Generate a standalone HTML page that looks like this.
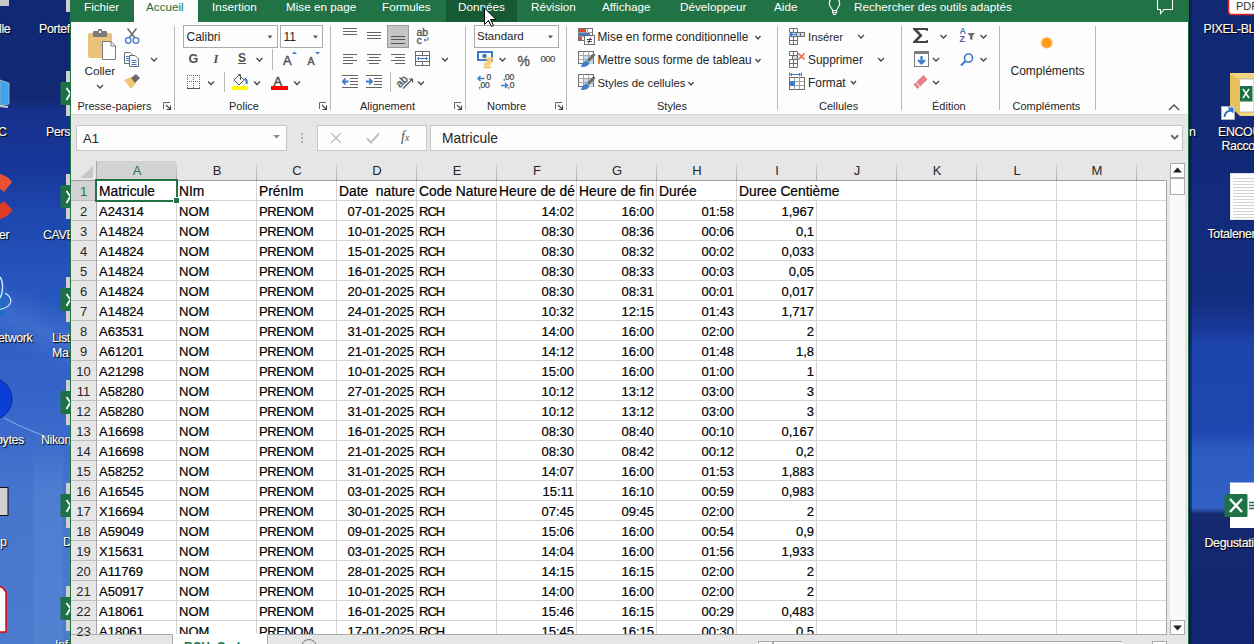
<!DOCTYPE html><html><head><meta charset="utf-8"><style>
html,body{margin:0;padding:0}
body{width:1254px;height:644px;overflow:hidden;position:relative;background:#112875;font-family:"Liberation Sans",sans-serif}
.b{position:absolute}
.t{position:absolute;line-height:1;white-space:nowrap}
.c{color:#000;-webkit-text-stroke:0.2px #000}
.dl{color:#fff;text-shadow:0 0 1px #000,1px 1px 1px #000;-webkit-text-stroke:0.15px #fff}
</style></head><body>
<div class="b" style="left:0;top:0;width:70px;height:644px;background:linear-gradient(180deg,#112875 0px,#112975 100px,#16318c 110px,#18379a 170px,#1d45ad 210px,#2453bb 270px,#2d5cc4 330px,#3968cb 420px,#4676cc 500px,#4a7bcd 644px)"></div>
<div class="b" style="left:0;top:0;width:70px;height:644px;overflow:hidden"><div class="b" style="left:-40px;top:300px;width:160px;height:60px;background:linear-gradient(180deg,rgba(90,140,220,0) 0%,rgba(90,140,220,0.35) 50%,rgba(90,140,220,0) 100%);transform:rotate(24deg)"></div><div class="b" style="left:33px;top:440px;width:30px;height:204px;background:linear-gradient(180deg,rgba(100,150,225,0) 0px,rgba(100,150,225,0.25) 50px)"></div></div>
<div class="b" style="left:1189px;top:0;width:65px;height:644px;background:linear-gradient(180deg,#112875 0px,#112976 120px,#132d80 300px,#1a3a9a 330px,#1d44ab 345px,#1e47b0 430px,#2c5cc2 450px,#3060c4 508px,#14296e 514px,#112672 644px)"></div>
<svg class="b" style="left:0;top:0" width="1254" height="644" viewBox="0 0 1254 644"><rect x="0" y="0" width="9" height="6" fill="#c8c8c8"/><path d="M0 80 L9 83 V104 L0 106 Z" fill="#3aa5f2" stroke="#9ab" stroke-width="1"/><path d="M0 106 L8 107" stroke="#ccc" stroke-width="2"/><path d="M0 174 Q8 176 12 182 L4 192 Q2 190 0 189 Z" fill="#ea5234"/><path d="M0 219 Q8 217 12.5 210 L4 201 Q2 203 0 204 Z" fill="#e03b24"/><ellipse cx="1" cy="304" rx="5" ry="13" fill="#1a6cc6" opacity="0.7"/><path d="M0 277 Q3 281 2.5 289 Q2 295 0 298" stroke="#d8f0ff" stroke-width="1.3" fill="none"/><path d="M5 293 Q12 297 10.5 303 Q8 308 0 309.5" stroke="#c4e6ff" stroke-width="1.2" fill="none"/><circle cx="-9" cy="399" r="21" fill="#0a3ed6" stroke="#072a90" stroke-width="1"/><path d="M4 418 Q30 432 70 445" stroke="#8fc0f5" stroke-width="1.2" fill="none" opacity="0.7"/><rect x="-4" y="487.5" width="12" height="28" fill="#d0d0d0" stroke="#111" stroke-width="1"/><path d="M-4 587 H2 L6 592 V632 H-4 Z" fill="#fff" stroke="#e00" stroke-width="1.5"/><rect x="66" y="0" width="4" height="12" fill="#cfcfcf"/><rect x="66" y="71" width="4" height="45" fill="#cfcfcf"/><rect x="60.5" y="82" width="10" height="23" rx="1" fill="#1e7145"/><path d="M66.5 88 L70 93 M66.5 100 L70 94" stroke="#fff" stroke-width="1.8"/><rect x="66" y="174" width="4" height="45" fill="#cfcfcf"/><rect x="60.5" y="185" width="10" height="23" rx="1" fill="#1e7145"/><path d="M66.5 191 L70 196 M66.5 203 L70 197" stroke="#fff" stroke-width="1.8"/><rect x="66" y="277" width="4" height="45" fill="#cfcfcf"/><rect x="60.5" y="288" width="10" height="23" rx="1" fill="#1e7145"/><path d="M66.5 294 L70 299 M66.5 306 L70 300" stroke="#fff" stroke-width="1.8"/><rect x="66" y="380" width="4" height="45" fill="#cfcfcf"/><rect x="60.5" y="391" width="10" height="23" rx="1" fill="#1e7145"/><path d="M66.5 397 L70 402 M66.5 409 L70 403" stroke="#fff" stroke-width="1.8"/><rect x="66" y="483" width="4" height="45" fill="#cfcfcf"/><rect x="60.5" y="494" width="10" height="23" rx="1" fill="#1e7145"/><path d="M66.5 500 L70 505 M66.5 512 L70 506" stroke="#fff" stroke-width="1.8"/><rect x="66" y="586" width="4" height="45" fill="#cfcfcf"/><rect x="60.5" y="597" width="10" height="23" rx="1" fill="#1e7145"/><path d="M66.5 603 L70 608 M66.5 615 L70 609" stroke="#fff" stroke-width="1.8"/><rect x="1228.5" y="-5" width="30" height="19.5" rx="3" fill="#fff" stroke="#e02020" stroke-width="1.5"/><path d="M1230 73 H1254 V116 H1240 L1230 105 Z" fill="#f3d67f"/><path d="M1236 79 H1254 V112 H1236 Z" fill="#fff" stroke="#aaa" stroke-width="0.8"/><rect x="1239.5" y="86" width="13" height="15.5" fill="#1e7145"/><path d="M1243 89 L1249 98 M1249 89 L1243 98" stroke="#fff" stroke-width="1.4"/><path d="M1230 73 L1240 80 V116 L1230 106 Z" fill="#e9bf5a"/><rect x="1221.5" y="106.5" width="13" height="13" fill="#fff" stroke="#bbb" stroke-width="0.8"/><path d="M1224.5 117 Q1225 111 1231 110.5 L1229.5 108.5 H1232.5 V111.5 L1231 110.5" stroke="#2d6fc4" stroke-width="2" fill="none"/><rect x="1230.5" y="173.5" width="30" height="46" fill="#fff" stroke="#e2e2e2"/><path d="M1233 178.5 H1254" stroke="#d2d2d2"/><path d="M1233 181.5 H1254" stroke="#d2d2d2"/><path d="M1233 184.5 H1254" stroke="#d2d2d2"/><path d="M1233 187.5 H1254" stroke="#d2d2d2"/><path d="M1233 190.5 H1254" stroke="#d2d2d2"/><path d="M1233 193.5 H1254" stroke="#d2d2d2"/><path d="M1233 196.5 H1254" stroke="#d2d2d2"/><path d="M1233 199.5 H1254" stroke="#d2d2d2"/><path d="M1233 202.5 H1254" stroke="#d2d2d2"/><path d="M1233 205.5 H1254" stroke="#d2d2d2"/><path d="M1233 208.5 H1254" stroke="#d2d2d2"/><path d="M1233 211.5 H1254" stroke="#d2d2d2"/><path d="M1233 214.5 H1254" stroke="#d2d2d2"/><path d="M1233 217.5 H1254" stroke="#d2d2d2"/><rect x="1230" y="482.5" width="30" height="45.5" fill="#fff"/><path d="M1249 502.5 H1254 M1249 505.5 H1254 M1249 508.5 H1254" stroke="#1e7145" stroke-width="1.6"/><rect x="1224.5" y="494" width="23" height="23" rx="1.5" fill="#1e7145"/><path d="M1230 499 L1242 512 M1242 499 L1230 512" stroke="#fff" stroke-width="2.4"/><rect x="1189" y="0" width="3" height="644" fill="#0b1c55" opacity="0.6"/><rect x="1189" y="0" width="1" height="644" fill="#080c30" opacity="0.8"/></svg>
<div class="t dl" style="left:-1px;top:22.50px;font-size:12.4px;letter-spacing:-0.35px">lle</div>
<div class="t dl" style="left:39px;top:22.50px;font-size:12.4px;letter-spacing:-0.35px">Portef</div>
<div class="t dl" style="left:-2px;top:125.50px;font-size:12.4px;letter-spacing:-0.35px">C</div>
<div class="t dl" style="left:46px;top:125.50px;font-size:12.4px;letter-spacing:-0.35px">Perso</div>
<div class="t dl" style="left:-1px;top:228.50px;font-size:12.4px;letter-spacing:-0.35px">er</div>
<div class="t dl" style="left:43px;top:228.50px;font-size:12.4px;letter-spacing:-0.35px">CAVE</div>
<div class="t dl" style="left:-2px;top:331.50px;font-size:12.4px;letter-spacing:-0.35px">etwork</div>
<div class="t dl" style="left:52px;top:331.50px;font-size:12.4px;letter-spacing:-0.35px">List</div>
<div class="t dl" style="left:52px;top:346.50px;font-size:12.4px;letter-spacing:-0.35px">Ma</div>
<div class="t dl" style="left:-4px;top:433.50px;font-size:12.4px;letter-spacing:-0.35px">bytes</div>
<div class="t dl" style="left:41px;top:433.50px;font-size:12.4px;letter-spacing:-0.35px">Nikon</div>
<div class="t dl" style="left:0px;top:535.50px;font-size:12.4px;letter-spacing:-0.35px">p</div>
<div class="t dl" style="left:63px;top:535.50px;font-size:12.4px;letter-spacing:-0.35px">D</div>
<div class="t dl" style="left:1203.5px;top:22.50px;font-size:12.4px;letter-spacing:-0.35px">PIXEL-BLU</div>
<div class="t dl" style="left:1189px;top:125.50px;font-size:12.4px;letter-spacing:-0.35px">n</div>
<div class="t dl" style="left:1218px;top:125.50px;font-size:12.4px;letter-spacing:-0.35px">ENCOU</div>
<div class="t dl" style="left:1221.5px;top:139.50px;font-size:12.4px;letter-spacing:-0.35px">Racco</div>
<div class="t dl" style="left:1207.5px;top:228.00px;font-size:12.4px;letter-spacing:-0.35px">Totalener</div>
<div class="t dl" style="left:1204.5px;top:537.00px;font-size:12.4px;letter-spacing:-0.35px">Degustati</div>
<div class="t dl" style="left:55px;top:638.50px;font-size:12.4px;letter-spacing:-0.35px">Inf</div>
<div class="t" style="left:1236px;top:1px;font-size:11px;color:#333">PDF</div>
<div class="b" style="left:70px;top:0px;width:1px;height:644px;background:#217346"></div>
<div class="b" style="left:1188px;top:0px;width:1px;height:644px;background:#217346"></div>
<div class="b" style="left:71px;top:0px;width:1117px;height:22px;background:#217346"></div>
<div class="b" style="left:71px;top:22px;width:1117px;height:92px;background:#fdfdfd"></div>
<div class="b" style="left:71px;top:114px;width:1117px;height:1px;background:#d5d5d5"></div>
<div class="b" style="left:71px;top:115px;width:1117px;height:519px;background:#e6e6e6"></div>
<div class="b" style="left:71px;top:634px;width:1117px;height:10px;background:#e6e6e6"></div>
<div class="b" style="left:134px;top:0px;width:64px;height:22px;background:#fdfdfd"></div>
<div class="b" style="left:446px;top:0px;width:71px;height:22px;background:#155a33"></div>
<div class="t " style="left:84px;top:1.10px;font-size:11.7px;color:#ffffff;">Fichier</div>
<div class="t " style="left:212px;top:1.10px;font-size:11.7px;color:#ffffff;">Insertion</div>
<div class="t " style="left:286px;top:1.10px;font-size:11.7px;color:#ffffff;">Mise en page</div>
<div class="t " style="left:382px;top:1.10px;font-size:11.7px;color:#ffffff;">Formules</div>
<div class="t " style="left:458px;top:1.10px;font-size:11.7px;color:#ffffff;">Données</div>
<div class="t " style="left:531px;top:1.10px;font-size:11.7px;color:#ffffff;">Révision</div>
<div class="t " style="left:602px;top:1.10px;font-size:11.7px;color:#ffffff;">Affichage</div>
<div class="t " style="left:680px;top:1.10px;font-size:11.7px;color:#ffffff;">Développeur</div>
<div class="t " style="left:774px;top:1.10px;font-size:11.7px;color:#ffffff;">Aide</div>
<div class="t " style="left:854px;top:1.10px;font-size:11.7px;color:#ffffff;">Rechercher des outils adaptés</div>
<div class="t " style="left:146px;top:1.10px;font-size:11.7px;color:#217346;">Accueil</div>
<div class="b" style="left:76px;top:125px;width:211px;height:26px;background:#fdfdfd;border:1px solid #c6c6c6;box-sizing:border-box"></div>
<div class="t " style="left:83px;top:132.00px;font-size:13px;color:#262626;">A1</div>
<svg class="b" style="left:272px;top:134px" width="9" height="6" viewBox="0 0 9 6"><path d="M1 1 L8 1 L4.5 4.6 Z" fill="#8a8a8a"/></svg>
<div class="b" style="left:301px;top:133px;width:2px;height:2px;background:#b4b4b4"></div>
<div class="b" style="left:301px;top:137px;width:2px;height:2px;background:#b4b4b4"></div>
<div class="b" style="left:301px;top:141px;width:2px;height:2px;background:#b4b4b4"></div>
<div class="b" style="left:317px;top:125px;width:110px;height:26px;background:#fdfdfd;border:1px solid #c6c6c6;box-sizing:border-box"></div>
<svg class="b" style="left:330px;top:132px" width="12" height="12" viewBox="0 0 12 12"><path d="M1 1 L11 11 M11 1 L1 11" stroke="#c2c2c2" stroke-width="1.5"/></svg>
<svg class="b" style="left:366px;top:132px" width="14" height="12" viewBox="0 0 14 12"><path d="M1 6.5 L5 10.5 L13 1.5" stroke="#c2c2c2" stroke-width="2" fill="none"/></svg>
<div class="t" style="left:401px;top:130px;font-size:14px;font-family:'Liberation Serif',serif;font-style:italic;color:#555">f<span style="font-size:10px">x</span></div>
<div class="b" style="left:430px;top:125px;width:753px;height:26px;background:#fdfdfd;border:1px solid #c6c6c6;box-sizing:border-box"></div>
<div class="t " style="left:442px;top:131.82px;font-size:13.8px;color:#262626;">Matricule</div>
<svg class="b" style="left:1170px;top:133px" width="10" height="8" viewBox="0 0 10 8"><path d="M1.2 2.2 L4.7 5.7 L8.2 2.2" stroke="#6a6a6a" stroke-width="2" fill="none"/></svg>
<div class="b" style="left:97px;top:181px;width:1069px;height:453px;background:#ffffff"></div>
<div class="b" style="left:176px;top:181px;width:1px;height:453px;background:#d4d4d4"></div>
<div class="b" style="left:256px;top:181px;width:1px;height:453px;background:#d4d4d4"></div>
<div class="b" style="left:336px;top:181px;width:1px;height:453px;background:#d4d4d4"></div>
<div class="b" style="left:416px;top:181px;width:1px;height:453px;background:#d4d4d4"></div>
<div class="b" style="left:496px;top:181px;width:1px;height:453px;background:#d4d4d4"></div>
<div class="b" style="left:576px;top:181px;width:1px;height:453px;background:#d4d4d4"></div>
<div class="b" style="left:656px;top:181px;width:1px;height:453px;background:#d4d4d4"></div>
<div class="b" style="left:736px;top:181px;width:1px;height:453px;background:#d4d4d4"></div>
<div class="b" style="left:816px;top:181px;width:1px;height:453px;background:#d4d4d4"></div>
<div class="b" style="left:896px;top:181px;width:1px;height:453px;background:#d4d4d4"></div>
<div class="b" style="left:976px;top:181px;width:1px;height:453px;background:#d4d4d4"></div>
<div class="b" style="left:1056px;top:181px;width:1px;height:453px;background:#d4d4d4"></div>
<div class="b" style="left:1136px;top:181px;width:1px;height:453px;background:#d4d4d4"></div>
<div class="b" style="left:71px;top:200px;width:1095px;height:1px;background:#d4d4d4"></div>
<div class="b" style="left:71px;top:220px;width:1095px;height:1px;background:#d4d4d4"></div>
<div class="b" style="left:71px;top:240px;width:1095px;height:1px;background:#d4d4d4"></div>
<div class="b" style="left:71px;top:260px;width:1095px;height:1px;background:#d4d4d4"></div>
<div class="b" style="left:71px;top:280px;width:1095px;height:1px;background:#d4d4d4"></div>
<div class="b" style="left:71px;top:300px;width:1095px;height:1px;background:#d4d4d4"></div>
<div class="b" style="left:71px;top:320px;width:1095px;height:1px;background:#d4d4d4"></div>
<div class="b" style="left:71px;top:340px;width:1095px;height:1px;background:#d4d4d4"></div>
<div class="b" style="left:71px;top:360px;width:1095px;height:1px;background:#d4d4d4"></div>
<div class="b" style="left:71px;top:380px;width:1095px;height:1px;background:#d4d4d4"></div>
<div class="b" style="left:71px;top:400px;width:1095px;height:1px;background:#d4d4d4"></div>
<div class="b" style="left:71px;top:420px;width:1095px;height:1px;background:#d4d4d4"></div>
<div class="b" style="left:71px;top:440px;width:1095px;height:1px;background:#d4d4d4"></div>
<div class="b" style="left:71px;top:460px;width:1095px;height:1px;background:#d4d4d4"></div>
<div class="b" style="left:71px;top:480px;width:1095px;height:1px;background:#d4d4d4"></div>
<div class="b" style="left:71px;top:500px;width:1095px;height:1px;background:#d4d4d4"></div>
<div class="b" style="left:71px;top:520px;width:1095px;height:1px;background:#d4d4d4"></div>
<div class="b" style="left:71px;top:540px;width:1095px;height:1px;background:#d4d4d4"></div>
<div class="b" style="left:71px;top:560px;width:1095px;height:1px;background:#d4d4d4"></div>
<div class="b" style="left:71px;top:580px;width:1095px;height:1px;background:#d4d4d4"></div>
<div class="b" style="left:71px;top:600px;width:1095px;height:1px;background:#d4d4d4"></div>
<div class="b" style="left:71px;top:620px;width:1095px;height:1px;background:#d4d4d4"></div>
<div class="b" style="left:71px;top:180px;width:1096px;height:1px;background:#9f9f9f"></div>
<div class="b" style="left:96px;top:161px;width:1px;height:473px;background:#a6a6a6"></div>
<div class="b" style="left:71px;top:200px;width:25px;height:1px;background:#bcbcbc"></div>
<div class="b" style="left:71px;top:220px;width:25px;height:1px;background:#bcbcbc"></div>
<div class="b" style="left:71px;top:240px;width:25px;height:1px;background:#bcbcbc"></div>
<div class="b" style="left:71px;top:260px;width:25px;height:1px;background:#bcbcbc"></div>
<div class="b" style="left:71px;top:280px;width:25px;height:1px;background:#bcbcbc"></div>
<div class="b" style="left:71px;top:300px;width:25px;height:1px;background:#bcbcbc"></div>
<div class="b" style="left:71px;top:320px;width:25px;height:1px;background:#bcbcbc"></div>
<div class="b" style="left:71px;top:340px;width:25px;height:1px;background:#bcbcbc"></div>
<div class="b" style="left:71px;top:360px;width:25px;height:1px;background:#bcbcbc"></div>
<div class="b" style="left:71px;top:380px;width:25px;height:1px;background:#bcbcbc"></div>
<div class="b" style="left:71px;top:400px;width:25px;height:1px;background:#bcbcbc"></div>
<div class="b" style="left:71px;top:420px;width:25px;height:1px;background:#bcbcbc"></div>
<div class="b" style="left:71px;top:440px;width:25px;height:1px;background:#bcbcbc"></div>
<div class="b" style="left:71px;top:460px;width:25px;height:1px;background:#bcbcbc"></div>
<div class="b" style="left:71px;top:480px;width:25px;height:1px;background:#bcbcbc"></div>
<div class="b" style="left:71px;top:500px;width:25px;height:1px;background:#bcbcbc"></div>
<div class="b" style="left:71px;top:520px;width:25px;height:1px;background:#bcbcbc"></div>
<div class="b" style="left:71px;top:540px;width:25px;height:1px;background:#bcbcbc"></div>
<div class="b" style="left:71px;top:560px;width:25px;height:1px;background:#bcbcbc"></div>
<div class="b" style="left:71px;top:580px;width:25px;height:1px;background:#bcbcbc"></div>
<div class="b" style="left:71px;top:600px;width:25px;height:1px;background:#bcbcbc"></div>
<div class="b" style="left:71px;top:620px;width:25px;height:1px;background:#bcbcbc"></div>
<div class="b" style="left:1166px;top:180px;width:1px;height:454px;background:#ababab"></div>
<div class="b" style="left:176px;top:161px;width:1px;height:19px;background:linear-gradient(180deg,#e0e0e0,#a8a8a8)"></div>
<div class="b" style="left:256px;top:161px;width:1px;height:19px;background:linear-gradient(180deg,#e0e0e0,#a8a8a8)"></div>
<div class="b" style="left:336px;top:161px;width:1px;height:19px;background:linear-gradient(180deg,#e0e0e0,#a8a8a8)"></div>
<div class="b" style="left:416px;top:161px;width:1px;height:19px;background:linear-gradient(180deg,#e0e0e0,#a8a8a8)"></div>
<div class="b" style="left:496px;top:161px;width:1px;height:19px;background:linear-gradient(180deg,#e0e0e0,#a8a8a8)"></div>
<div class="b" style="left:576px;top:161px;width:1px;height:19px;background:linear-gradient(180deg,#e0e0e0,#a8a8a8)"></div>
<div class="b" style="left:656px;top:161px;width:1px;height:19px;background:linear-gradient(180deg,#e0e0e0,#a8a8a8)"></div>
<div class="b" style="left:736px;top:161px;width:1px;height:19px;background:linear-gradient(180deg,#e0e0e0,#a8a8a8)"></div>
<div class="b" style="left:816px;top:161px;width:1px;height:19px;background:linear-gradient(180deg,#e0e0e0,#a8a8a8)"></div>
<div class="b" style="left:896px;top:161px;width:1px;height:19px;background:linear-gradient(180deg,#e0e0e0,#a8a8a8)"></div>
<div class="b" style="left:976px;top:161px;width:1px;height:19px;background:linear-gradient(180deg,#e0e0e0,#a8a8a8)"></div>
<div class="b" style="left:1056px;top:161px;width:1px;height:19px;background:linear-gradient(180deg,#e0e0e0,#a8a8a8)"></div>
<div class="b" style="left:1136px;top:161px;width:1px;height:19px;background:linear-gradient(180deg,#e0e0e0,#a8a8a8)"></div>
<div class="b" style="left:97px;top:161px;width:79px;height:19px;background:#d2d2d2"></div>
<div class="b" style="left:71px;top:181px;width:25px;height:19px;background:#d2d2d2"></div>
<svg class="b" style="left:78px;top:165px" width="16" height="14" viewBox="0 0 16 14"><path d="M15 1 L15 13 L2 13 Z" fill="#c6c6c6"/></svg>
<div class="t " style="left:37px;width:200px;text-align:center;top:164.00px;font-size:13px;color:#217346;">A</div>
<div class="t " style="left:117px;width:200px;text-align:center;top:164.00px;font-size:13px;color:#262626;">B</div>
<div class="t " style="left:197px;width:200px;text-align:center;top:164.00px;font-size:13px;color:#262626;">C</div>
<div class="t " style="left:277px;width:200px;text-align:center;top:164.00px;font-size:13px;color:#262626;">D</div>
<div class="t " style="left:357px;width:200px;text-align:center;top:164.00px;font-size:13px;color:#262626;">E</div>
<div class="t " style="left:437px;width:200px;text-align:center;top:164.00px;font-size:13px;color:#262626;">F</div>
<div class="t " style="left:517px;width:200px;text-align:center;top:164.00px;font-size:13px;color:#262626;">G</div>
<div class="t " style="left:597px;width:200px;text-align:center;top:164.00px;font-size:13px;color:#262626;">H</div>
<div class="t " style="left:677px;width:200px;text-align:center;top:164.00px;font-size:13px;color:#262626;">I</div>
<div class="t " style="left:757px;width:200px;text-align:center;top:164.00px;font-size:13px;color:#262626;">J</div>
<div class="t " style="left:837px;width:200px;text-align:center;top:164.00px;font-size:13px;color:#262626;">K</div>
<div class="t " style="left:917px;width:200px;text-align:center;top:164.00px;font-size:13px;color:#262626;">L</div>
<div class="t " style="left:997px;width:200px;text-align:center;top:164.00px;font-size:13px;color:#262626;">M</div>
<div class="t " style="left:-16.5px;width:200px;text-align:center;top:185.00px;font-size:13px;color:#217346;">1</div>
<div class="t " style="left:-16.5px;width:200px;text-align:center;top:205.00px;font-size:13px;color:#262626;">2</div>
<div class="t " style="left:-16.5px;width:200px;text-align:center;top:225.00px;font-size:13px;color:#262626;">3</div>
<div class="t " style="left:-16.5px;width:200px;text-align:center;top:245.00px;font-size:13px;color:#262626;">4</div>
<div class="t " style="left:-16.5px;width:200px;text-align:center;top:265.00px;font-size:13px;color:#262626;">5</div>
<div class="t " style="left:-16.5px;width:200px;text-align:center;top:285.00px;font-size:13px;color:#262626;">6</div>
<div class="t " style="left:-16.5px;width:200px;text-align:center;top:305.00px;font-size:13px;color:#262626;">7</div>
<div class="t " style="left:-16.5px;width:200px;text-align:center;top:325.00px;font-size:13px;color:#262626;">8</div>
<div class="t " style="left:-16.5px;width:200px;text-align:center;top:345.00px;font-size:13px;color:#262626;">9</div>
<div class="t " style="left:-16.5px;width:200px;text-align:center;top:365.00px;font-size:13px;color:#262626;">10</div>
<div class="t " style="left:-16.5px;width:200px;text-align:center;top:385.00px;font-size:13px;color:#262626;">11</div>
<div class="t " style="left:-16.5px;width:200px;text-align:center;top:405.00px;font-size:13px;color:#262626;">12</div>
<div class="t " style="left:-16.5px;width:200px;text-align:center;top:425.00px;font-size:13px;color:#262626;">13</div>
<div class="t " style="left:-16.5px;width:200px;text-align:center;top:445.00px;font-size:13px;color:#262626;">14</div>
<div class="t " style="left:-16.5px;width:200px;text-align:center;top:465.00px;font-size:13px;color:#262626;">15</div>
<div class="t " style="left:-16.5px;width:200px;text-align:center;top:485.00px;font-size:13px;color:#262626;">16</div>
<div class="t " style="left:-16.5px;width:200px;text-align:center;top:505.00px;font-size:13px;color:#262626;">17</div>
<div class="t " style="left:-16.5px;width:200px;text-align:center;top:525.00px;font-size:13px;color:#262626;">18</div>
<div class="t " style="left:-16.5px;width:200px;text-align:center;top:545.00px;font-size:13px;color:#262626;">19</div>
<div class="t " style="left:-16.5px;width:200px;text-align:center;top:565.00px;font-size:13px;color:#262626;">20</div>
<div class="t " style="left:-16.5px;width:200px;text-align:center;top:585.00px;font-size:13px;color:#262626;">21</div>
<div class="t " style="left:-16.5px;width:200px;text-align:center;top:605.00px;font-size:13px;color:#262626;">22</div>
<div class="t " style="left:-16.5px;width:200px;text-align:center;top:625.00px;font-size:13px;color:#262626;">23</div>
<div class="b" style="left:816px;top:181px;width:1px;height:19px;background:#ffffff"></div>
<div class="t c" style="left:99px;top:185.32px;font-size:13.8px;color:#000000;white-space:pre">Matricule</div>
<div class="t c" style="left:179px;top:185.32px;font-size:13.8px;color:#000000;white-space:pre">NIm</div>
<div class="t c" style="left:259px;top:185.32px;font-size:13.8px;color:#000000;white-space:pre">PrénIm</div>
<div class="t c" style="left:339px;top:185.32px;font-size:13.8px;color:#000000;white-space:pre">Date  nature</div>
<div class="t c" style="left:419px;top:185.32px;font-size:13.8px;color:#000000;white-space:pre">Code Nature</div>
<div class="b" style="left:497px;top:181px;width:79px;height:19px;overflow:hidden"><div class="t c" style="left:2px;top:4.32px;font-size:13.8px;color:#000000;white-space:pre">Heure de dé</div></div>
<div class="t c" style="left:579px;top:185.32px;font-size:13.8px;color:#000000;white-space:pre">Heure de fin</div>
<div class="t c" style="left:659px;top:185.32px;font-size:13.8px;color:#000000;white-space:pre">Durée</div>
<div class="t c" style="left:739px;top:185.32px;font-size:13.8px;color:#000000;white-space:pre">Duree Centième</div>
<div class="b" style="left:0;top:0;width:1254px;height:634px;overflow:hidden"><div class="t c" style="left:99px;top:205.00px;font-size:13px;">A24314</div>
<div class="t c" style="left:179px;top:205.00px;font-size:13px;">NOM</div>
<div class="t c" style="left:259px;top:205.00px;font-size:13px;letter-spacing:-0.45px;">PRENOM</div>
<div class="t c" style="right:840px;top:205.00px;font-size:13px;">07-01-2025</div>
<div class="t c" style="left:419px;top:205.00px;font-size:13px;letter-spacing:-1px;">RCH</div>
<div class="t c" style="right:680px;top:205.00px;font-size:13px;">14:02</div>
<div class="t c" style="right:600px;top:205.00px;font-size:13px;">16:00</div>
<div class="t c" style="right:520px;top:205.00px;font-size:13px;">01:58</div>
<div class="t c" style="right:440px;top:205.00px;font-size:13px;">1,967</div>
<div class="t c" style="left:99px;top:225.00px;font-size:13px;">A14824</div>
<div class="t c" style="left:179px;top:225.00px;font-size:13px;">NOM</div>
<div class="t c" style="left:259px;top:225.00px;font-size:13px;letter-spacing:-0.45px;">PRENOM</div>
<div class="t c" style="right:840px;top:225.00px;font-size:13px;">10-01-2025</div>
<div class="t c" style="left:419px;top:225.00px;font-size:13px;letter-spacing:-1px;">RCH</div>
<div class="t c" style="right:680px;top:225.00px;font-size:13px;">08:30</div>
<div class="t c" style="right:600px;top:225.00px;font-size:13px;">08:36</div>
<div class="t c" style="right:520px;top:225.00px;font-size:13px;">00:06</div>
<div class="t c" style="right:440px;top:225.00px;font-size:13px;">0,1</div>
<div class="t c" style="left:99px;top:245.00px;font-size:13px;">A14824</div>
<div class="t c" style="left:179px;top:245.00px;font-size:13px;">NOM</div>
<div class="t c" style="left:259px;top:245.00px;font-size:13px;letter-spacing:-0.45px;">PRENOM</div>
<div class="t c" style="right:840px;top:245.00px;font-size:13px;">15-01-2025</div>
<div class="t c" style="left:419px;top:245.00px;font-size:13px;letter-spacing:-1px;">RCH</div>
<div class="t c" style="right:680px;top:245.00px;font-size:13px;">08:30</div>
<div class="t c" style="right:600px;top:245.00px;font-size:13px;">08:32</div>
<div class="t c" style="right:520px;top:245.00px;font-size:13px;">00:02</div>
<div class="t c" style="right:440px;top:245.00px;font-size:13px;">0,033</div>
<div class="t c" style="left:99px;top:265.00px;font-size:13px;">A14824</div>
<div class="t c" style="left:179px;top:265.00px;font-size:13px;">NOM</div>
<div class="t c" style="left:259px;top:265.00px;font-size:13px;letter-spacing:-0.45px;">PRENOM</div>
<div class="t c" style="right:840px;top:265.00px;font-size:13px;">16-01-2025</div>
<div class="t c" style="left:419px;top:265.00px;font-size:13px;letter-spacing:-1px;">RCH</div>
<div class="t c" style="right:680px;top:265.00px;font-size:13px;">08:30</div>
<div class="t c" style="right:600px;top:265.00px;font-size:13px;">08:33</div>
<div class="t c" style="right:520px;top:265.00px;font-size:13px;">00:03</div>
<div class="t c" style="right:440px;top:265.00px;font-size:13px;">0,05</div>
<div class="t c" style="left:99px;top:285.00px;font-size:13px;">A14824</div>
<div class="t c" style="left:179px;top:285.00px;font-size:13px;">NOM</div>
<div class="t c" style="left:259px;top:285.00px;font-size:13px;letter-spacing:-0.45px;">PRENOM</div>
<div class="t c" style="right:840px;top:285.00px;font-size:13px;">20-01-2025</div>
<div class="t c" style="left:419px;top:285.00px;font-size:13px;letter-spacing:-1px;">RCH</div>
<div class="t c" style="right:680px;top:285.00px;font-size:13px;">08:30</div>
<div class="t c" style="right:600px;top:285.00px;font-size:13px;">08:31</div>
<div class="t c" style="right:520px;top:285.00px;font-size:13px;">00:01</div>
<div class="t c" style="right:440px;top:285.00px;font-size:13px;">0,017</div>
<div class="t c" style="left:99px;top:305.00px;font-size:13px;">A14824</div>
<div class="t c" style="left:179px;top:305.00px;font-size:13px;">NOM</div>
<div class="t c" style="left:259px;top:305.00px;font-size:13px;letter-spacing:-0.45px;">PRENOM</div>
<div class="t c" style="right:840px;top:305.00px;font-size:13px;">24-01-2025</div>
<div class="t c" style="left:419px;top:305.00px;font-size:13px;letter-spacing:-1px;">RCH</div>
<div class="t c" style="right:680px;top:305.00px;font-size:13px;">10:32</div>
<div class="t c" style="right:600px;top:305.00px;font-size:13px;">12:15</div>
<div class="t c" style="right:520px;top:305.00px;font-size:13px;">01:43</div>
<div class="t c" style="right:440px;top:305.00px;font-size:13px;">1,717</div>
<div class="t c" style="left:99px;top:325.00px;font-size:13px;">A63531</div>
<div class="t c" style="left:179px;top:325.00px;font-size:13px;">NOM</div>
<div class="t c" style="left:259px;top:325.00px;font-size:13px;letter-spacing:-0.45px;">PRENOM</div>
<div class="t c" style="right:840px;top:325.00px;font-size:13px;">31-01-2025</div>
<div class="t c" style="left:419px;top:325.00px;font-size:13px;letter-spacing:-1px;">RCH</div>
<div class="t c" style="right:680px;top:325.00px;font-size:13px;">14:00</div>
<div class="t c" style="right:600px;top:325.00px;font-size:13px;">16:00</div>
<div class="t c" style="right:520px;top:325.00px;font-size:13px;">02:00</div>
<div class="t c" style="right:440px;top:325.00px;font-size:13px;">2</div>
<div class="t c" style="left:99px;top:345.00px;font-size:13px;">A61201</div>
<div class="t c" style="left:179px;top:345.00px;font-size:13px;">NOM</div>
<div class="t c" style="left:259px;top:345.00px;font-size:13px;letter-spacing:-0.45px;">PRENOM</div>
<div class="t c" style="right:840px;top:345.00px;font-size:13px;">21-01-2025</div>
<div class="t c" style="left:419px;top:345.00px;font-size:13px;letter-spacing:-1px;">RCH</div>
<div class="t c" style="right:680px;top:345.00px;font-size:13px;">14:12</div>
<div class="t c" style="right:600px;top:345.00px;font-size:13px;">16:00</div>
<div class="t c" style="right:520px;top:345.00px;font-size:13px;">01:48</div>
<div class="t c" style="right:440px;top:345.00px;font-size:13px;">1,8</div>
<div class="t c" style="left:99px;top:365.00px;font-size:13px;">A21298</div>
<div class="t c" style="left:179px;top:365.00px;font-size:13px;">NOM</div>
<div class="t c" style="left:259px;top:365.00px;font-size:13px;letter-spacing:-0.45px;">PRENOM</div>
<div class="t c" style="right:840px;top:365.00px;font-size:13px;">10-01-2025</div>
<div class="t c" style="left:419px;top:365.00px;font-size:13px;letter-spacing:-1px;">RCH</div>
<div class="t c" style="right:680px;top:365.00px;font-size:13px;">15:00</div>
<div class="t c" style="right:600px;top:365.00px;font-size:13px;">16:00</div>
<div class="t c" style="right:520px;top:365.00px;font-size:13px;">01:00</div>
<div class="t c" style="right:440px;top:365.00px;font-size:13px;">1</div>
<div class="t c" style="left:99px;top:385.00px;font-size:13px;">A58280</div>
<div class="t c" style="left:179px;top:385.00px;font-size:13px;">NOM</div>
<div class="t c" style="left:259px;top:385.00px;font-size:13px;letter-spacing:-0.45px;">PRENOM</div>
<div class="t c" style="right:840px;top:385.00px;font-size:13px;">27-01-2025</div>
<div class="t c" style="left:419px;top:385.00px;font-size:13px;letter-spacing:-1px;">RCH</div>
<div class="t c" style="right:680px;top:385.00px;font-size:13px;">10:12</div>
<div class="t c" style="right:600px;top:385.00px;font-size:13px;">13:12</div>
<div class="t c" style="right:520px;top:385.00px;font-size:13px;">03:00</div>
<div class="t c" style="right:440px;top:385.00px;font-size:13px;">3</div>
<div class="t c" style="left:99px;top:405.00px;font-size:13px;">A58280</div>
<div class="t c" style="left:179px;top:405.00px;font-size:13px;">NOM</div>
<div class="t c" style="left:259px;top:405.00px;font-size:13px;letter-spacing:-0.45px;">PRENOM</div>
<div class="t c" style="right:840px;top:405.00px;font-size:13px;">31-01-2025</div>
<div class="t c" style="left:419px;top:405.00px;font-size:13px;letter-spacing:-1px;">RCH</div>
<div class="t c" style="right:680px;top:405.00px;font-size:13px;">10:12</div>
<div class="t c" style="right:600px;top:405.00px;font-size:13px;">13:12</div>
<div class="t c" style="right:520px;top:405.00px;font-size:13px;">03:00</div>
<div class="t c" style="right:440px;top:405.00px;font-size:13px;">3</div>
<div class="t c" style="left:99px;top:425.00px;font-size:13px;">A16698</div>
<div class="t c" style="left:179px;top:425.00px;font-size:13px;">NOM</div>
<div class="t c" style="left:259px;top:425.00px;font-size:13px;letter-spacing:-0.45px;">PRENOM</div>
<div class="t c" style="right:840px;top:425.00px;font-size:13px;">16-01-2025</div>
<div class="t c" style="left:419px;top:425.00px;font-size:13px;letter-spacing:-1px;">RCH</div>
<div class="t c" style="right:680px;top:425.00px;font-size:13px;">08:30</div>
<div class="t c" style="right:600px;top:425.00px;font-size:13px;">08:40</div>
<div class="t c" style="right:520px;top:425.00px;font-size:13px;">00:10</div>
<div class="t c" style="right:440px;top:425.00px;font-size:13px;">0,167</div>
<div class="t c" style="left:99px;top:445.00px;font-size:13px;">A16698</div>
<div class="t c" style="left:179px;top:445.00px;font-size:13px;">NOM</div>
<div class="t c" style="left:259px;top:445.00px;font-size:13px;letter-spacing:-0.45px;">PRENOM</div>
<div class="t c" style="right:840px;top:445.00px;font-size:13px;">21-01-2025</div>
<div class="t c" style="left:419px;top:445.00px;font-size:13px;letter-spacing:-1px;">RCH</div>
<div class="t c" style="right:680px;top:445.00px;font-size:13px;">08:30</div>
<div class="t c" style="right:600px;top:445.00px;font-size:13px;">08:42</div>
<div class="t c" style="right:520px;top:445.00px;font-size:13px;">00:12</div>
<div class="t c" style="right:440px;top:445.00px;font-size:13px;">0,2</div>
<div class="t c" style="left:99px;top:465.00px;font-size:13px;">A58252</div>
<div class="t c" style="left:179px;top:465.00px;font-size:13px;">NOM</div>
<div class="t c" style="left:259px;top:465.00px;font-size:13px;letter-spacing:-0.45px;">PRENOM</div>
<div class="t c" style="right:840px;top:465.00px;font-size:13px;">31-01-2025</div>
<div class="t c" style="left:419px;top:465.00px;font-size:13px;letter-spacing:-1px;">RCH</div>
<div class="t c" style="right:680px;top:465.00px;font-size:13px;">14:07</div>
<div class="t c" style="right:600px;top:465.00px;font-size:13px;">16:00</div>
<div class="t c" style="right:520px;top:465.00px;font-size:13px;">01:53</div>
<div class="t c" style="right:440px;top:465.00px;font-size:13px;">1,883</div>
<div class="t c" style="left:99px;top:485.00px;font-size:13px;">A16545</div>
<div class="t c" style="left:179px;top:485.00px;font-size:13px;">NOM</div>
<div class="t c" style="left:259px;top:485.00px;font-size:13px;letter-spacing:-0.45px;">PRENOM</div>
<div class="t c" style="right:840px;top:485.00px;font-size:13px;">03-01-2025</div>
<div class="t c" style="left:419px;top:485.00px;font-size:13px;letter-spacing:-1px;">RCH</div>
<div class="t c" style="right:680px;top:485.00px;font-size:13px;">15:11</div>
<div class="t c" style="right:600px;top:485.00px;font-size:13px;">16:10</div>
<div class="t c" style="right:520px;top:485.00px;font-size:13px;">00:59</div>
<div class="t c" style="right:440px;top:485.00px;font-size:13px;">0,983</div>
<div class="t c" style="left:99px;top:505.00px;font-size:13px;">X16694</div>
<div class="t c" style="left:179px;top:505.00px;font-size:13px;">NOM</div>
<div class="t c" style="left:259px;top:505.00px;font-size:13px;letter-spacing:-0.45px;">PRENOM</div>
<div class="t c" style="right:840px;top:505.00px;font-size:13px;">30-01-2025</div>
<div class="t c" style="left:419px;top:505.00px;font-size:13px;letter-spacing:-1px;">RCH</div>
<div class="t c" style="right:680px;top:505.00px;font-size:13px;">07:45</div>
<div class="t c" style="right:600px;top:505.00px;font-size:13px;">09:45</div>
<div class="t c" style="right:520px;top:505.00px;font-size:13px;">02:00</div>
<div class="t c" style="right:440px;top:505.00px;font-size:13px;">2</div>
<div class="t c" style="left:99px;top:525.00px;font-size:13px;">A59049</div>
<div class="t c" style="left:179px;top:525.00px;font-size:13px;">NOM</div>
<div class="t c" style="left:259px;top:525.00px;font-size:13px;letter-spacing:-0.45px;">PRENOM</div>
<div class="t c" style="right:840px;top:525.00px;font-size:13px;">09-01-2025</div>
<div class="t c" style="left:419px;top:525.00px;font-size:13px;letter-spacing:-1px;">RCH</div>
<div class="t c" style="right:680px;top:525.00px;font-size:13px;">15:06</div>
<div class="t c" style="right:600px;top:525.00px;font-size:13px;">16:00</div>
<div class="t c" style="right:520px;top:525.00px;font-size:13px;">00:54</div>
<div class="t c" style="right:440px;top:525.00px;font-size:13px;">0,9</div>
<div class="t c" style="left:99px;top:545.00px;font-size:13px;">X15631</div>
<div class="t c" style="left:179px;top:545.00px;font-size:13px;">NOM</div>
<div class="t c" style="left:259px;top:545.00px;font-size:13px;letter-spacing:-0.45px;">PRENOM</div>
<div class="t c" style="right:840px;top:545.00px;font-size:13px;">03-01-2025</div>
<div class="t c" style="left:419px;top:545.00px;font-size:13px;letter-spacing:-1px;">RCH</div>
<div class="t c" style="right:680px;top:545.00px;font-size:13px;">14:04</div>
<div class="t c" style="right:600px;top:545.00px;font-size:13px;">16:00</div>
<div class="t c" style="right:520px;top:545.00px;font-size:13px;">01:56</div>
<div class="t c" style="right:440px;top:545.00px;font-size:13px;">1,933</div>
<div class="t c" style="left:99px;top:565.00px;font-size:13px;">A11769</div>
<div class="t c" style="left:179px;top:565.00px;font-size:13px;">NOM</div>
<div class="t c" style="left:259px;top:565.00px;font-size:13px;letter-spacing:-0.45px;">PRENOM</div>
<div class="t c" style="right:840px;top:565.00px;font-size:13px;">28-01-2025</div>
<div class="t c" style="left:419px;top:565.00px;font-size:13px;letter-spacing:-1px;">RCH</div>
<div class="t c" style="right:680px;top:565.00px;font-size:13px;">14:15</div>
<div class="t c" style="right:600px;top:565.00px;font-size:13px;">16:15</div>
<div class="t c" style="right:520px;top:565.00px;font-size:13px;">02:00</div>
<div class="t c" style="right:440px;top:565.00px;font-size:13px;">2</div>
<div class="t c" style="left:99px;top:585.00px;font-size:13px;">A50917</div>
<div class="t c" style="left:179px;top:585.00px;font-size:13px;">NOM</div>
<div class="t c" style="left:259px;top:585.00px;font-size:13px;letter-spacing:-0.45px;">PRENOM</div>
<div class="t c" style="right:840px;top:585.00px;font-size:13px;">10-01-2025</div>
<div class="t c" style="left:419px;top:585.00px;font-size:13px;letter-spacing:-1px;">RCH</div>
<div class="t c" style="right:680px;top:585.00px;font-size:13px;">14:00</div>
<div class="t c" style="right:600px;top:585.00px;font-size:13px;">16:00</div>
<div class="t c" style="right:520px;top:585.00px;font-size:13px;">02:00</div>
<div class="t c" style="right:440px;top:585.00px;font-size:13px;">2</div>
<div class="t c" style="left:99px;top:605.00px;font-size:13px;">A18061</div>
<div class="t c" style="left:179px;top:605.00px;font-size:13px;">NOM</div>
<div class="t c" style="left:259px;top:605.00px;font-size:13px;letter-spacing:-0.45px;">PRENOM</div>
<div class="t c" style="right:840px;top:605.00px;font-size:13px;">16-01-2025</div>
<div class="t c" style="left:419px;top:605.00px;font-size:13px;letter-spacing:-1px;">RCH</div>
<div class="t c" style="right:680px;top:605.00px;font-size:13px;">15:46</div>
<div class="t c" style="right:600px;top:605.00px;font-size:13px;">16:15</div>
<div class="t c" style="right:520px;top:605.00px;font-size:13px;">00:29</div>
<div class="t c" style="right:440px;top:605.00px;font-size:13px;">0,483</div>
<div class="t c" style="left:99px;top:625.00px;font-size:13px;">A18061</div>
<div class="t c" style="left:179px;top:625.00px;font-size:13px;">NOM</div>
<div class="t c" style="left:259px;top:625.00px;font-size:13px;letter-spacing:-0.45px;">PRENOM</div>
<div class="t c" style="right:840px;top:625.00px;font-size:13px;">17-01-2025</div>
<div class="t c" style="left:419px;top:625.00px;font-size:13px;letter-spacing:-1px;">RCH</div>
<div class="t c" style="right:680px;top:625.00px;font-size:13px;">15:45</div>
<div class="t c" style="right:600px;top:625.00px;font-size:13px;">16:15</div>
<div class="t c" style="right:520px;top:625.00px;font-size:13px;">00:30</div>
<div class="t c" style="right:440px;top:625.00px;font-size:13px;">0,5</div></div>
<div class="b" style="left:95px;top:179px;width:83px;height:23px;border:2px solid #217346;box-sizing:border-box"></div>
<div class="b" style="left:173px;top:197px;width:5px;height:5px;background:#217346;border:1px solid #fff"></div>
<div class="b" style="left:1170px;top:163px;width:15px;height:457px;background:#f9f9f9"></div>
<div class="b" style="left:1170px;top:163px;width:15px;height:15px;background:#fdfdfd;border:1px solid #ababab;box-sizing:border-box"></div>
<svg class="b" style="left:1173px;top:167px" width="9" height="6" viewBox="0 0 9 6"><path d="M0 5.5 L4.5 0.5 L9 5.5 Z" fill="#222"/></svg>
<div class="b" style="left:1170px;top:178px;width:15px;height:17px;background:#fdfdfd;border:1px solid #ababab;box-sizing:border-box"></div>
<div class="b" style="left:1170px;top:620px;width:15px;height:15px;background:#fdfdfd;border:1px solid #ababab;box-sizing:border-box"></div>
<svg class="b" style="left:1173px;top:625px" width="9" height="6" viewBox="0 0 9 6"><path d="M0 0.5 L9 0.5 L4.5 5.5 Z" fill="#222"/></svg>
<div class="b" style="left:71px;top:634px;width:1096px;height:1px;background:#ababab"></div>
<div class="b" style="left:172px;top:634px;width:96px;height:10px;background:#ffffff;border-left:1px solid #ababab;border-right:1px solid #ababab;box-sizing:border-box"></div>
<div class="t" style="left:184px;top:641px;font-size:12px;font-weight:bold;color:#217346">RCH_Code</div>
<svg class="b" style="left:300px;top:638px" width="18" height="8" viewBox="0 0 18 8"><circle cx="9" cy="9" r="7.5" stroke="#777" stroke-width="1" fill="none"/></svg>
<div class="b" style="left:758px;top:641px;width:408px;height:3px;background:#e6e6e6"></div>
<div class="b" style="left:758px;top:641px;width:15px;height:3px;background:#fdfdfd;border:1px solid #ababab;border-bottom:0;box-sizing:border-box"></div>
<div class="b" style="left:773px;top:641px;width:349px;height:3px;background:#fdfdfd;border-top:1px solid #ababab;border-left:1px solid #ababab;box-sizing:border-box"></div>
<div class="b" style="left:1152px;top:641px;width:15px;height:3px;background:#fdfdfd;border:1px solid #ababab;border-bottom:0;box-sizing:border-box"></div>
<div class="b" style="left:174px;top:26px;width:1px;height:84px;background:#b8b8b8"></div>
<div class="b" style="left:330px;top:26px;width:1px;height:84px;background:#b8b8b8"></div>
<div class="b" style="left:465px;top:26px;width:1px;height:84px;background:#b8b8b8"></div>
<div class="b" style="left:566px;top:26px;width:1px;height:84px;background:#b8b8b8"></div>
<div class="b" style="left:777px;top:26px;width:1px;height:84px;background:#b8b8b8"></div>
<div class="b" style="left:901px;top:26px;width:1px;height:84px;background:#b8b8b8"></div>
<div class="b" style="left:999px;top:26px;width:1px;height:84px;background:#b8b8b8"></div>
<div class="b" style="left:1095px;top:26px;width:1px;height:84px;background:#b8b8b8"></div>
<div class="t " style="left:77.5px;top:100.69px;font-size:11px;color:#262626;">Presse-papiers</div>
<div class="t " style="left:229px;top:100.69px;font-size:11px;color:#262626;">Police</div>
<div class="t " style="left:360px;top:100.69px;font-size:11px;color:#262626;">Alignement</div>
<div class="t " style="left:487px;top:100.69px;font-size:11px;color:#262626;">Nombre</div>
<div class="t " style="left:657px;top:100.69px;font-size:11px;color:#262626;">Styles</div>
<div class="t " style="left:819px;top:100.69px;font-size:11px;color:#262626;">Cellules</div>
<div class="t " style="left:932px;top:100.69px;font-size:11px;color:#262626;">Édition</div>
<div class="t " style="left:1012.5px;top:100.69px;font-size:11px;color:#262626;">Compléments</div>
<div class="t " style="left:84.5px;top:65.10px;font-size:11.7px;color:#262626;">Coller</div>
<div class="b" style="left:183px;top:25px;width:95px;height:23px;background:#fdfdfd;border:1px solid #ababab;box-sizing:border-box"></div>
<div class="t " style="left:186.5px;top:30.84px;font-size:12px;color:#262626;">Calibri</div>
<div class="b" style="left:280px;top:25px;width:43px;height:23px;background:#fdfdfd;border:1px solid #ababab;box-sizing:border-box"></div>
<div class="t " style="left:283.5px;top:30.84px;font-size:12px;color:#262626;">11</div>
<div class="t" style="left:188.5px;top:52.5px;font-size:12.5px;font-weight:bold;color:#505050">G</div>
<div class="t" style="left:213.5px;top:52.5px;font-size:12.5px;font-style:italic;font-family:'Liberation Serif',serif;font-weight:bold;color:#505050">I</div>
<div class="t" style="left:238px;top:52px;font-size:12px;font-weight:bold;color:#505050;text-decoration:underline">S</div>
<div class="b" style="left:272px;top:49px;width:1px;height:21px;background:#b8b8b8"></div>
<div class="t" style="left:283px;top:53.5px;font-size:13px;color:#505050;-webkit-text-stroke:0.4px #505050">A</div>
<div class="t" style="left:307.5px;top:56px;font-size:10.5px;color:#505050;-webkit-text-stroke:0.4px #505050">A</div>
<div class="b" style="left:224px;top:72px;width:1px;height:20px;background:#b8b8b8"></div>
<div class="t" style="left:273.5px;top:74.5px;font-size:13px;color:#505050;-webkit-text-stroke:0.5px #505050">A</div>
<div class="b" style="left:387px;top:25px;width:22px;height:23px;background:#c5c5c5;border:1px solid #9c9c9c;box-sizing:border-box"></div>
<div class="t" style="left:416.5px;top:27.5px;font-size:10.5px;line-height:8px;color:#505050;-webkit-text-stroke:0.3px #505050">ab<br>c</div>
<div class="b" style="left:390px;top:72px;width:1px;height:20px;background:#b8b8b8"></div>
<div class="t" style="left:396px;top:76px;font-size:11px;color:#505050;-webkit-text-stroke:0.3px #505050;transform:rotate(-45deg);transform-origin:6px 6px">ab</div>
<div class="b" style="left:474px;top:25px;width:85px;height:23px;background:#fdfdfd;border:1px solid #ababab;box-sizing:border-box"></div>
<div class="t " style="left:477px;top:31.27px;font-size:11.5px;color:#262626;">Standard</div>
<div class="t " style="left:517.5px;top:53.65px;font-size:14px;color:#505050;-webkit-text-stroke:0.3px #505050;">%</div>
<div class="t " style="left:540.5px;top:54.37px;font-size:9.6px;color:#505050;letter-spacing:-0.6px;-webkit-text-stroke:0.2px #505050;">000</div>
<div class="t " style="left:486.5px;top:73.30px;font-size:8.5px;color:#404040;-webkit-text-stroke:0.2px #404040;">0</div>
<div class="t " style="left:478.5px;top:81.30px;font-size:8.5px;color:#404040;letter-spacing:-0.3px;-webkit-text-stroke:0.2px #404040;">,00</div>
<div class="t " style="left:503px;top:73.30px;font-size:8.5px;color:#404040;letter-spacing:-0.3px;-webkit-text-stroke:0.2px #404040;">,00</div>
<div class="t " style="left:507.5px;top:81.30px;font-size:8.5px;color:#404040;-webkit-text-stroke:0.2px #404040;">,0</div>
<div class="t " style="left:597.5px;top:31.77px;font-size:11.85px;color:#262626;">Mise en forme conditionnelle</div>
<div class="t " style="left:597.5px;top:54.77px;font-size:11.85px;color:#262626;">Mettre sous forme de tableau</div>
<div class="t " style="left:597.5px;top:78.15px;font-size:11.4px;color:#262626;">Styles de cellules</div>
<div class="t " style="left:808px;top:32.48px;font-size:11.25px;color:#262626;">Insérer</div>
<div class="t " style="left:808px;top:54.93px;font-size:11.9px;color:#262626;">Supprimer</div>
<div class="t " style="left:808px;top:77.93px;font-size:11.9px;color:#262626;">Format</div>
<div class="t" style="left:959.5px;top:26.5px;font-size:9px;line-height:8px;font-weight:bold;color:#3f7bc8">A</div>
<div class="t" style="left:959.5px;top:35px;font-size:9px;line-height:8px;font-weight:bold;color:#7b4ea8">Z</div>
<div class="t " style="left:1010.5px;top:64.84px;font-size:12px;color:#262626;">Compléments</div>
<svg class="b" style="left:0;top:0" width="1254" height="120" viewBox="0 0 1254 120"><path d="M163.5 109 V102.5 H170" stroke="#666" stroke-width="1" fill="none"/><path d="M166 105 L170.5 109.5 M170.5 105.5 V109.5 H166.5" stroke="#444" stroke-width="1.1" fill="none"/><path d="M319.5 109 V102.5 H326" stroke="#666" stroke-width="1" fill="none"/><path d="M322 105 L326.5 109.5 M326.5 105.5 V109.5 H322.5" stroke="#444" stroke-width="1.1" fill="none"/><path d="M454.5 109 V102.5 H461" stroke="#666" stroke-width="1" fill="none"/><path d="M457 105 L461.5 109.5 M461.5 105.5 V109.5 H457.5" stroke="#444" stroke-width="1.1" fill="none"/><path d="M555.5 109 V102.5 H562" stroke="#666" stroke-width="1" fill="none"/><path d="M558 105 L562.5 109.5 M562.5 105.5 V109.5 H558.5" stroke="#444" stroke-width="1.1" fill="none"/><rect x="88" y="33" width="24" height="25" rx="2" fill="#e9c27c"/><rect x="93" y="31" width="14" height="6" rx="1" fill="#7b7b7b"/><rect x="98" y="29" width="4" height="3" fill="#7b7b7b"/><rect x="99" y="31" width="2" height="2" fill="#fdfdfd"/><path d="M102.5 41.5 H111 L115.5 46 V59.5 H102.5 Z" fill="#fdfdfd" stroke="#7b7b7b" stroke-width="1"/><path d="M111 41.5 V46 H115.5" fill="none" stroke="#7b7b7b" stroke-width="1"/><path d="M97.0 85.0 L100 88.0 L103.0 85.0" stroke="#444" stroke-width="1.3" fill="none"/><path d="M127.5 28.5 L135 38 M136.5 28.5 L129 38" stroke="#6b6b6b" stroke-width="1.6"/><circle cx="128.3" cy="40.5" r="2.8" fill="none" stroke="#3f7bc8" stroke-width="1.3"/><circle cx="136" cy="40.5" r="2.8" fill="none" stroke="#3f7bc8" stroke-width="1.3"/><path d="M124.5 52.5 H130 L132.5 55 V63.5 H124.5 Z" fill="#fdfdfd" stroke="#6b6b6b"/><path d="M126 56.5 H129 M126 58.5 H130 M126 60.5 H130" stroke="#3f7bc8"/><path d="M129.5 55.5 H135 L138.5 59 V66.5 H129.5 Z" fill="#fdfdfd" stroke="#6b6b6b"/><path d="M131.5 60.5 H136.5 M131.5 62.5 H136.5 M131.5 64.5 H136.5" stroke="#3f7bc8"/><path d="M151.0 58.0 L154 61.0 L157.0 58.0" stroke="#444" stroke-width="1.3" fill="none"/><path d="M124 80 L131 77 L136 83 L131 89 Z" fill="#efc877"/><path d="M131 78 L136 74 L140 78 L135 83 Z" fill="#6b6b6b"/><path d="M267.5 35.5 H272.5 L270 38.5 Z" fill="#555"/><path d="M313 35.5 H318 L315.5 38.5 Z" fill="#555"/><path d="M256.5 58.0 L259.5 61.0 L262.5 58.0" stroke="#444" stroke-width="1.3" fill="none"/><path d="M292 54 L294.5 51.5 L297 54 Z" fill="#3f7bc8"/><path d="M315 52 L317.5 54.5 L320 52 Z" fill="#3f7bc8"/><path d="M187 75.5 H200 M187 81.5 H200 M187.5 75 V88 M193.5 75 V88 M199.5 75 V88" stroke="#6b6b6b" stroke-dasharray="1 1"/><path d="M187 88.5 H200" stroke="#555"/><path d="M208.0 81.5 L211 84.5 L214.0 81.5" stroke="#444" stroke-width="1.3" fill="none"/><path d="M234 80 L239 75 L244 80 L239 85 Z" fill="#fdfdfd" stroke="#555"/><path d="M238.5 74.5 H240.5 V80" stroke="#555" fill="none"/><path d="M244.5 78.5 Q247.5 80 246.5 84" stroke="#3f7bc8" stroke-width="2" fill="none"/><rect x="232" y="86" width="16" height="4" fill="#ffff00"/><path d="M254.0 81.5 L257 84.5 L260.0 81.5" stroke="#444" stroke-width="1.3" fill="none"/><rect x="271" y="86" width="17" height="4" fill="#ff0000"/><path d="M294.0 81.5 L297 84.5 L300.0 81.5" stroke="#444" stroke-width="1.3" fill="none"/><path d="M343 28.5 H357" stroke="#666"/><path d="M343 31.5 H357" stroke="#666"/><path d="M343 34.5 H357" stroke="#666"/><path d="M367 32.5 H381" stroke="#666"/><path d="M367 35.5 H381" stroke="#666"/><path d="M367 38.5 H381" stroke="#666"/><path d="M391 36.5 H405" stroke="#555"/><path d="M391 39.5 H405" stroke="#555"/><path d="M391 43.5 H405" stroke="#555"/><path d="M428 37 V40 H424 M425.5 38.5 L424 40 L425.5 41.5" stroke="#3f7bc8" fill="none"/><path d="M343 54.5 H357 M343 57.5 H353 M343 60.5 H357 M343 63.5 H353" stroke="#666"/><path d="M367 54.5 H381 M369 57.5 H379 M367 60.5 H381 M369 63.5 H379" stroke="#666"/><path d="M391 54.5 H405 M395 57.5 H405 M391 60.5 H405 M395 63.5 H405" stroke="#666"/><rect x="415.5" y="51.5" width="14" height="14" fill="none" stroke="#6b6b6b"/><path d="M415.5 55.5 H429.5 M415.5 61.5 H429.5 M422.5 51.5 V55.5 M422.5 61.5 V65.5" stroke="#6b6b6b"/><path d="M418 58.5 H427 M419 57 L417.5 58.5 L419 60 M426 57 L427.5 58.5 L426 60" stroke="#3f7bc8" fill="none"/><path d="M442.0 58.0 L445 61.0 L448.0 58.0" stroke="#444" stroke-width="1.3" fill="none"/><path d="M342 75.5 H358 M350 78.5 H358 M350 81.5 H358 M350 84.5 H358 M342 87.5 H358" stroke="#666"/><path d="M343 81.5 H348.5 M345.5 78.5 L342.8 81.5 L345.5 84.5" stroke="#3f7bc8" stroke-width="1.8" fill="none"/><path d="M366 75.5 H382 M374 78.5 H382 M374 81.5 H382 M374 84.5 H382 M366 87.5 H382" stroke="#666"/><path d="M366 81.5 H372 M369.2 78.5 L372 81.5 L369.2 84.5" stroke="#3f7bc8" stroke-width="1.8" fill="none"/><path d="M403 88.5 L412.5 79 M409 79 H412.5 V82.5" stroke="#505050" stroke-width="1.1" fill="none"/><path d="M418.0 81.5 L421 84.5 L424.0 81.5" stroke="#444" stroke-width="1.3" fill="none"/><path d="M548 35.5 H553 L550.5 38.5 Z" fill="#555"/><rect x="478" y="52" width="14" height="8" fill="none" stroke="#3f7bc8" stroke-width="2"/><path d="M477 51 H481 L477 55 Z M493 51 H489 L493 55 Z M477 61 H481 L477 57 Z" fill="#3f7bc8"/><circle cx="484.5" cy="56" r="2.3" fill="#3f7bc8"/><ellipse cx="489.5" cy="58.5" rx="3.8" ry="1.5" fill="#f6cf7c"/><ellipse cx="489.5" cy="61.5" rx="3.8" ry="1.5" fill="#f6cf7c"/><ellipse cx="487" cy="64" rx="3.8" ry="1.5" fill="#f6cf7c"/><ellipse cx="487" cy="67" rx="3.8" ry="1.5" fill="#f6cf7c"/><path d="M499.5 58.0 L502.5 61.0 L505.5 58.0" stroke="#444" stroke-width="1.3" fill="none"/><path d="M478 78.5 H484.5 M480.5 76 L478 78.5 L480.5 81" stroke="#3f7bc8" stroke-width="1.5" fill="none"/><path d="M501 85.5 H507.5 M505 83 L507.5 85.5 L505 88" stroke="#3f7bc8" stroke-width="1.5" fill="none"/><rect x="578.5" y="28.5" width="14" height="12" fill="#fdfdfd" stroke="#6f6f6f"/><path d="M578.5 32.5 H592.5 M578.5 36.5 H592.5 M587.5 28.5 V40.5" stroke="#a0a0a0"/><rect x="579" y="29" width="7" height="3" fill="#e04a2c"/><rect x="579" y="33" width="11" height="3" fill="#3f7bc8"/><rect x="579" y="37" width="3" height="3" fill="#e04a2c"/><rect x="584.5" y="35.5" width="10" height="9" fill="#fdfdfd" stroke="#6f6f6f"/><path d="M587 39.5 H592 M587 41.5 H592 M590.5 37.5 L588.5 43.5" stroke="#333" stroke-width="0.9"/><rect x="578.5" y="51.5" width="15" height="12" fill="#fdfdfd" stroke="#6f6f6f"/><rect x="583" y="55" width="10" height="9" fill="#c5d9f1"/><path d="M578.5 55.5 H593.5 M578.5 59.5 H593.5 M583.5 51.5 V63.5 M588.5 51.5 V63.5" stroke="#a8a8a8"/><path d="M594.5 54 L588 61" stroke="#6b6b6b" stroke-width="3"/><path d="M581 67 Q582 62 586.5 60.5 L589.5 63.5 Q587 67.5 581 67 Z" fill="#3f7bc8"/><rect x="578.5" y="74.5" width="15" height="12" fill="#fdfdfd" stroke="#6f6f6f"/><rect x="583" y="78" width="10" height="9" fill="#c5d9f1"/><path d="M578.5 78.5 H593.5 M578.5 82.5 H593.5 M583.5 74.5 V86.5 M588.5 74.5 V86.5" stroke="#a8a8a8"/><path d="M594.5 77 L588 84" stroke="#6b6b6b" stroke-width="3"/><path d="M581 90 Q582 85 586.5 83.5 L589.5 86.5 Q587 90.5 581 90 Z" fill="#3f7bc8"/><path d="M755.5 36.0 L758 39.0 L760.5 36.0" stroke="#444" stroke-width="1.3" fill="none"/><path d="M755.5 59.0 L758 62.0 L760.5 59.0" stroke="#444" stroke-width="1.3" fill="none"/><path d="M688.5 82.0 L691 85.0 L693.5 82.0" stroke="#444" stroke-width="1.3" fill="none"/><path d="M789.5 28.5 H797.5 V32.5 H789.5 Z M793.5 28.5 V32.5 M789.5 36.5 H797.5 V44.5 H789.5 Z M789.5 40.5 H797.5 M793.5 36.5 V44.5" fill="none" stroke="#6f6f6f"/><rect x="796.5" y="32.5" width="8" height="4" fill="#c5d9f1" stroke="#6f6f6f"/><path d="M800.5 32.5 V36.5" stroke="#6f6f6f"/><path d="M790 34.5 H797 M792.5 32 L790 34.5 L792.5 37" stroke="#3f7bc8" stroke-width="1.6" fill="none"/><path d="M789.5 51.5 H797.5 V55.5 H789.5 Z M793.5 51.5 V55.5 M789.5 59.5 H797.5 V67.5 H789.5 Z M789.5 63.5 H797.5 M793.5 59.5 V67.5" fill="none" stroke="#6f6f6f"/><rect x="792.5" y="55.5" width="5" height="4" fill="#c5d9f1" stroke="#6f6f6f"/><path d="M798.5 53.5 L804.5 59.5 M804.5 53.5 L798.5 59.5" stroke="#e0653f" stroke-width="1.6"/><path d="M789.5 72.5 V76 M801.5 72.5 V76 M790 74.5 H801 M792 73 L790.5 74.5 L792 76 M799 73 L800.5 74.5 L799 76" stroke="#3f7bc8" fill="none"/><rect x="789.5" y="77.5" width="15" height="12" fill="#fdfdfd" stroke="#6f6f6f"/><path d="M789.5 81.5 H804.5 M789.5 85.5 H804.5 M794.5 77.5 V89.5 M799.5 77.5 V89.5" stroke="#a0a0a0"/><rect x="790" y="81" width="5" height="5" fill="#3f7bc8"/><path d="M858.0 35.0 L861 38.0 L864.0 35.0" stroke="#444" stroke-width="1.3" fill="none"/><path d="M878.0 58.0 L881 61.0 L884.0 58.0" stroke="#444" stroke-width="1.3" fill="none"/><path d="M851.0 81.0 L853.5 84.0 L856.0 81.0" stroke="#444" stroke-width="1.3" fill="none"/><path d="M913 28 H928 V31 H926.5 V30 H917.5 L922.5 35.5 L917.5 41 H926.5 V40 H928 V43 H913 V41.8 L919 35.5 L913 29.2 Z" fill="#444"/><path d="M940.5 35.0 L943.5 38.0 L946.5 35.0" stroke="#444" stroke-width="1.3" fill="none"/><path d="M967.5 33 H975 L972.5 36 V39.5 H970 V36 Z" fill="#6b6b6b"/><path d="M980.5 35.0 L983.5 38.0 L986.5 35.0" stroke="#444" stroke-width="1.3" fill="none"/><rect x="914.5" y="51.5" width="14" height="15" fill="#fdfdfd" stroke="#7b7b7b"/><rect x="914" y="51" width="15" height="3" fill="#7b7b7b"/><path d="M921.5 56 V63.5 M918 60 L921.5 63.5 L925 60" stroke="#3f7bc8" stroke-width="2.2" fill="none"/><path d="M933.0 58.0 L936 61.0 L939.0 58.0" stroke="#444" stroke-width="1.3" fill="none"/><circle cx="968.5" cy="58" r="4" fill="none" stroke="#3f7bc8" stroke-width="1.6"/><path d="M965.5 61 L961 65.5" stroke="#3f7bc8" stroke-width="2.2"/><path d="M980.5 58.0 L983.5 61.0 L986.5 58.0" stroke="#444" stroke-width="1.3" fill="none"/><path d="M913.5 84.5 L923.5 75 L927.5 79.5 L917.5 89 Z" fill="#e9808e"/><path d="M915.8 82.3 L919.9 86.8" stroke="#fdfdfd" stroke-width="1"/><path d="M933.0 81.0 L936 84.0 L939.0 81.0" stroke="#444" stroke-width="1.3" fill="none"/><circle cx="1046.7" cy="42.8" r="5.3" fill="#ff9c1a"/><circle cx="1046.7" cy="42.8" r="6" fill="none" stroke="#ffc27a" stroke-width="0.8" stroke-dasharray="1 1"/><path d="M1169 110 L1174 105 L1179 110" stroke="#444" stroke-width="1.3" fill="none"/><path d="M832.6 10 L830.3 6.5 Q829.3 5 829.3 3.5 Q829.5 -2 834.5 -2 Q839.5 -2 839.7 3.5 Q839.7 5 838.7 6.5 L836.6 10" fill="none" stroke="#fff" stroke-width="1.1"/><rect x="832.6" y="10.6" width="4" height="2.2" fill="none" stroke="#fff" stroke-width="1.1"/><path d="M833 14.5 H836" stroke="#fff" stroke-width="1.1"/><path d="M1157.5 -1 V9.5 H1160.5 V13.5 L1164 9.5 H1172.5 V-1" fill="none" stroke="#fff" stroke-width="1.1"/></svg>
<svg class="b" style="left:0;top:0" width="520" height="30" viewBox="0 0 520 30"><path d="M484.5 8 L484.5 24.5 L488.5 20.5 L491.5 26.5 L493.5 25.5 L490.5 19.5 L496 19.5 Z" fill="#fff" stroke="#000" stroke-width="1" stroke-linejoin="miter"/></svg>
</body></html>
